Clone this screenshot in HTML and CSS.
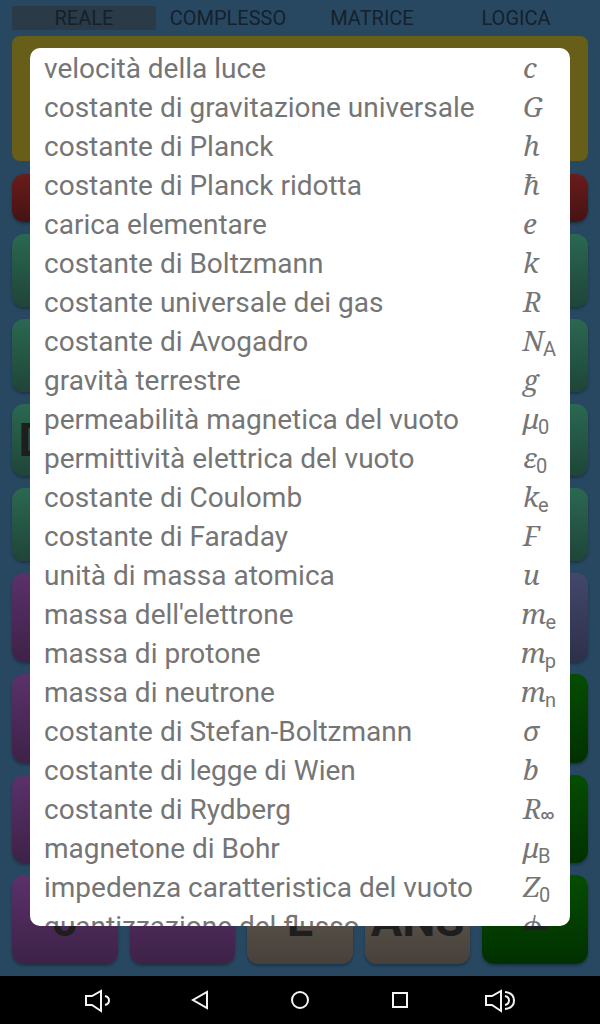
FILE: index.html
```html
<!DOCTYPE html>
<html lang="it">
<head>
    <meta charset="UTF-8">
    <meta name="viewport" content="width=device-width, initial-scale=1.0">
    <title>Calcolatrice - Costanti</title>
    <link rel="stylesheet" href="styles.css">
</head>
<body>
    <div class="screen">
        <main class="calculator">
            <nav class="modes">
                <button type="button" class="mode active">REALE</button>
                <button type="button" class="mode">COMPLESSO</button>
                <button type="button" class="mode">MATRICE</button>
                <button type="button" class="mode">LOGICA</button>
            </nav>
            <div class="display"></div>
            <div class="keys">
                <div class="key red wide"></div>

                <div class="key green"></div>
                <div class="key green"></div>
                <div class="key green"></div>
                <div class="key green"></div>
                <div class="key green"></div>

                <div class="key green"></div>
                <div class="key green"></div>
                <div class="key green"></div>
                <div class="key green"></div>
                <div class="key green"></div>

                <button type="button" class="key green">DRG</button>
                <div class="key green"></div>
                <div class="key green"></div>
                <div class="key green"></div>
                <div class="key green"></div>

                <div class="key green"></div>
                <div class="key green"></div>
                <div class="key green"></div>
                <div class="key green"></div>
                <div class="key green"></div>

                <div class="key purple"></div>
                <div class="key purple"></div>
                <div class="key purple"></div>
                <div class="key slate"></div>
                <div class="key slate"></div>

                <div class="key purple"></div>
                <div class="key purple"></div>
                <div class="key purple"></div>
                <div class="key dark"></div>
                <div class="key dark"></div>

                <div class="key purple"></div>
                <div class="key purple"></div>
                <div class="key purple"></div>
                <div class="key dark"></div>
                <div class="key dark"></div>

                <button type="button" class="key purple">0</button>
                <button type="button" class="key purple dot">•</button>
                <button type="button" class="key brown">E</button>
                <button type="button" class="key brown">ANS</button>
                <button type="button" class="key dark equals">=</button>
            </div>
        </main>

        <!-- constants list, shown over the keypad -->
        <div class="dialog" role="dialog" aria-label="Costanti">
            <ul class="constants">
                <li><button type="button" class="constant"><span>velocità della luce</span><span class="symbol"><i>c</i></span></button></li>
                <li><button type="button" class="constant"><span>costante di gravitazione universale</span><span class="symbol"><i>G</i></span></button></li>
                <li><button type="button" class="constant"><span>costante di Planck</span><span class="symbol"><i>h</i></span></button></li>
                <li><button type="button" class="constant"><span>costante di Planck ridotta</span><span class="symbol"><i>ħ</i></span></button></li>
                <li><button type="button" class="constant"><span>carica elementare</span><span class="symbol"><i>e</i></span></button></li>
                <li><button type="button" class="constant"><span>costante di Boltzmann</span><span class="symbol"><i>k</i></span></button></li>
                <li><button type="button" class="constant"><span>costante universale dei gas</span><span class="symbol"><i>R</i></span></button></li>
                <li><button type="button" class="constant"><span>costante di Avogadro</span><span class="symbol"><i>N</i><sub>A</sub></span></button></li>
                <li><button type="button" class="constant"><span>gravità terrestre</span><span class="symbol"><i>g</i></span></button></li>
                <li><button type="button" class="constant"><span>permeabilità magnetica del vuoto</span><span class="symbol"><i>μ</i><sub>0</sub></span></button></li>
                <li><button type="button" class="constant"><span>permittività elettrica del vuoto</span><span class="symbol"><i>ε</i><sub>0</sub></span></button></li>
                <li><button type="button" class="constant"><span>costante di Coulomb</span><span class="symbol"><i>k</i><sub>e</sub></span></button></li>
                <li><button type="button" class="constant"><span>costante di Faraday</span><span class="symbol"><i>F</i></span></button></li>
                <li><button type="button" class="constant"><span>unità di massa atomica</span><span class="symbol"><i>u</i></span></button></li>
                <li><button type="button" class="constant"><span>massa dell'elettrone</span><span class="symbol"><i>m</i><sub>e</sub></span></button></li>
                <li><button type="button" class="constant"><span>massa di protone</span><span class="symbol"><i>m</i><sub>p</sub></span></button></li>
                <li><button type="button" class="constant"><span>massa di neutrone</span><span class="symbol"><i>m</i><sub>n</sub></span></button></li>
                <li><button type="button" class="constant"><span>costante di Stefan-Boltzmann</span><span class="symbol"><i>σ</i></span></button></li>
                <li><button type="button" class="constant"><span>costante di legge di Wien</span><span class="symbol"><i>b</i></span></button></li>
                <li><button type="button" class="constant"><span>costante di Rydberg</span><span class="symbol"><i>R</i><sub class="infinity">∞</sub></span></button></li>
                <li><button type="button" class="constant"><span>magnetone di Bohr</span><span class="symbol"><i>μ</i><sub>B</sub></span></button></li>
                <li><button type="button" class="constant"><span>impedenza caratteristica del vuoto</span><span class="symbol"><i>Z</i><sub>0</sub></span></button></li>
                <li><button type="button" class="constant"><span>quantizzazione del flusso</span><span class="symbol"><i>ϕ</i></span></button></li>
            </ul>
        </div>
    </div>

    <footer class="navbar">
        <button type="button" aria-label="Volume giù">
            <svg viewBox="0 0 32 32"><path d="M2 12H8L17 7V27L8 21H2Z"/><path d="M21 12Q25 13 25 16.500T21 21"/></svg>
        </button>
        <button type="button" aria-label="Indietro">
            <svg viewBox="0 0 32 32"><path d="M23 8V24L9 16Z"/></svg>
        </button>
        <button type="button" aria-label="Home">
            <svg viewBox="0 0 32 32"><circle cx="16" cy="16" r="8"/></svg>
        </button>
        <button type="button" aria-label="Recenti">
            <svg viewBox="0 0 32 32"><rect x="9" y="9" width="14" height="14"/></svg>
        </button>
        <button type="button" aria-label="Volume su">
            <svg viewBox="0 0 32 32"><path d="M2 12H8L17 7V27L8 21H2Z"/><path d="M21 12Q25 13 25 16.500T21 21"/><path d="M21 8Q30 9 30 16.500T21 25"/></svg>
        </button>
    </footer>
</body>
</html>
```
FILE: styles.css
```css
* {
    box-sizing: border-box;
}

body {
    margin: 0;
    height: 100vh;
    display: flex;
    flex-direction: column;
    font-family: Roboto, sans-serif;
    background-color: #000;
}

button {
    border: none;
    padding: 0;
    background: none;
    font-family: inherit;
    cursor: pointer;
}

.screen {
    position: relative;
    flex: 1;
    min-height: 0;
    background-color: #284862;
}

.calculator {
    height: 100%;
    padding: 6px 12px 12px;
    display: flex;
    flex-direction: column;
}

.modes {
    display: flex;
}

.mode {
    flex: 1;
    height: 24px;
    font-size: 20px;
    line-height: 24px;
    color: #14212c;
}

.mode.active {
    background-color: #2a3b47;
}

.display {
    height: 125px;
    margin: 6px 0 13px;
    border-radius: 8px;
    background-color: #665e19;
}

.keys {
    flex: 1;
    min-height: 0;
    display: grid;
    grid-template-columns: repeat(5, 1fr);
    grid-template-rows: 48px repeat(4, 73fr) repeat(4, 89fr);
    gap: 12px;
}

.key {
    min-width: 0;
    min-height: 0;
    border-radius: 12px;
    font-size: 47px;
    font-weight: bold;
    line-height: 48px;
    color: #1e1e1e;
    box-shadow: 0 2px 3px rgba(0, 0, 0, 0.3);
}

.dot {
    font-size: 72px;
}

.equals {
    font-size: 54px;
}

.wide {
    grid-column: 1 / -1;
}

.red {
    background: linear-gradient(#691c1b, #451312);
}

.green {
    background: linear-gradient(#2a6851, #1f4538);
}

.purple {
    background: linear-gradient(#5b316a, #3d2247);
}

.slate {
    background: linear-gradient(#42486b, #2d304a);
}

.dark {
    background: linear-gradient(#054d00, #023000);
}

.brown {
    background: linear-gradient(#665c52, #47413b);
}

.dialog {
    position: absolute;
    inset: 48px 30px 50px;
    overflow: hidden;
    border-radius: 10px;
    background-color: #fff;
}

.constants {
    list-style: none;
    margin: 0;
    padding: 1px 14px;
}

.constant {
    width: 100%;
    height: 39px;
    display: flex;
    justify-content: space-between;
    font-size: 28px;
    line-height: 39px;
    text-align: left;
    white-space: nowrap;
    color: #757575;
}

.symbol {
    min-width: 33px;
}

.symbol i {
    font-family: "Noto Serif", "Droid Serif", "Liberation Serif", serif;
    line-height: 28px;
}

.symbol sub {
    margin-left: -1px;
    font-size: 20px;
    line-height: 20px;
    vertical-align: -5px;
}

.symbol .infinity {
    font-size: 13px;
    font-weight: bold;
    vertical-align: 0;
}

.navbar {
    height: 48px;
    padding: 0 50px;
    display: flex;
    background-color: #000;
}

.navbar button {
    flex: 1;
    display: flex;
    align-items: center;
    justify-content: center;
}

.navbar svg {
    width: 32px;
    height: 32px;
    fill: none;
    stroke: #f4f4f4;
    stroke-width: 2;
}
```
